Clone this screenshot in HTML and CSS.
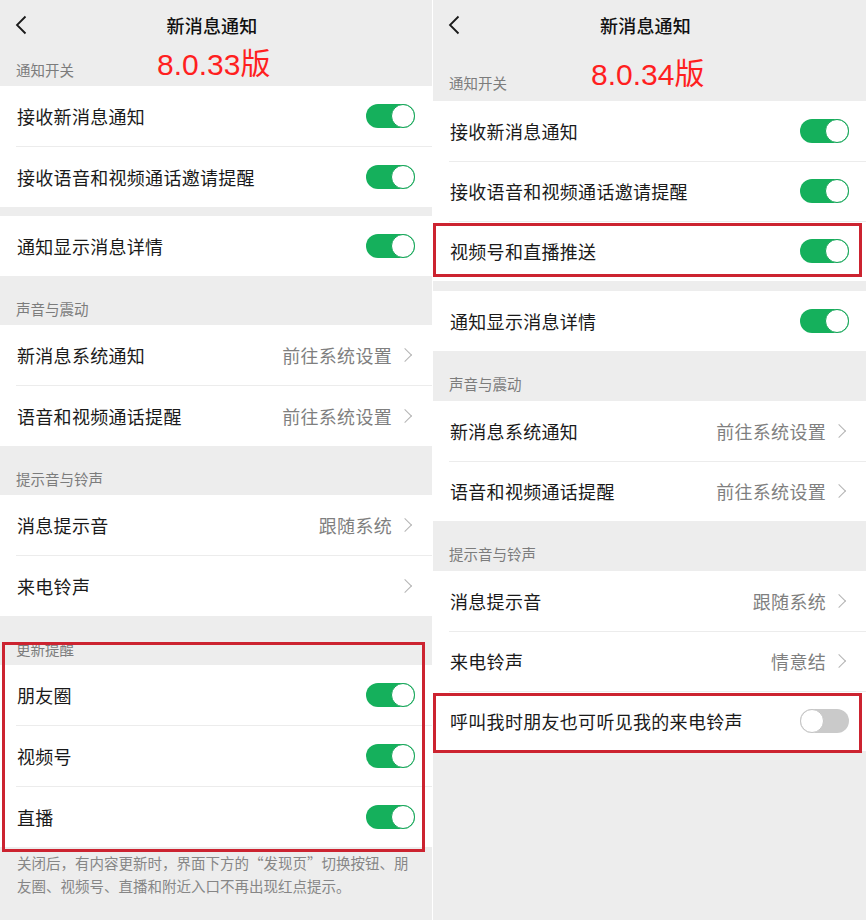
FILE: index.html
```html
<!DOCTYPE html>
<html lang="zh-CN">
<head>
<meta charset="utf-8">
<title>新消息通知</title>
<link rel="stylesheet" href="styles.css">
</head>
<body>
<div class="screens">
  <section class="panel panel-left">
    <header class="nav">
      <svg class="back" width="12" height="20" viewBox="0 0 12 20"><polyline points="10.5,1.5 2,10 10.5,18.5" fill="none" stroke="#1a1a1a" stroke-width="1.8"/></svg>
      <div class="nav-title">新消息通知</div>
    </header>
    <div class="sec-head sec-first"><span>通知开关</span><span class="ver">8.0.33<span class="ver-cjk">版</span></span></div>
    <div class="group">
      <div class="row"><span class="label">接收新消息通知</span><span class="switch on"></span></div>
      <div class="row"><span class="label">接收语音和视频通话邀请提醒</span><span class="switch on"></span></div>
    </div>
    <div class="group spaced">
      <div class="row"><span class="label">通知显示消息详情</span><span class="switch on"></span></div>
    </div>
    <div class="sec-head"><span>声音与震动</span></div>
    <div class="group">
      <div class="row"><span class="label">新消息系统通知</span><span class="value">前往系统设置</span><span class="chev"></span></div>
      <div class="row"><span class="label">语音和视频通话提醒</span><span class="value">前往系统设置</span><span class="chev"></span></div>
    </div>
    <div class="sec-head"><span>提示音与铃声</span></div>
    <div class="group">
      <div class="row"><span class="label">消息提示音</span><span class="value">跟随系统</span><span class="chev"></span></div>
      <div class="row"><span class="label">来电铃声</span><span class="value"></span><span class="chev"></span></div>
    </div>
    <div class="marked marked-update">
      <div class="sec-head"><span>更新提醒</span></div>
      <div class="group">
        <div class="row"><span class="label">朋友圈</span><span class="switch on"></span></div>
        <div class="row"><span class="label">视频号</span><span class="switch on"></span></div>
        <div class="row"><span class="label">直播</span><span class="switch on"></span></div>
      </div>
    </div>
    <p class="foot">关闭后，有内容更新时，界面下方的“发现页”切换按钮、朋友圈、视频号、直播和附近入口不再出现红点提示。</p>
  </section>

  <section class="panel panel-right">
    <header class="nav">
      <svg class="back" width="12" height="20" viewBox="0 0 12 20"><polyline points="10.5,1.5 2,10 10.5,18.5" fill="none" stroke="#1a1a1a" stroke-width="1.8"/></svg>
      <div class="nav-title">新消息通知</div>
    </header>
    <div class="sec-head sec-tall sec-top"><span>通知开关</span><span class="ver ver-right">8.0.34<span class="ver-cjk">版</span></span></div>
    <div class="group">
      <div class="row"><span class="label">接收新消息通知</span><span class="switch on"></span></div>
      <div class="row"><span class="label">接收语音和视频通话邀请提醒</span><span class="switch on"></span></div>
      <div class="row marked marked-push"><span class="label">视频号和直播推送</span><span class="switch on"></span></div>
    </div>
    <div class="group spaced">
      <div class="row"><span class="label">通知显示消息详情</span><span class="switch on"></span></div>
    </div>
    <div class="sec-head sec-tall"><span>声音与震动</span></div>
    <div class="group">
      <div class="row"><span class="label">新消息系统通知</span><span class="value">前往系统设置</span><span class="chev"></span></div>
      <div class="row"><span class="label">语音和视频通话提醒</span><span class="value">前往系统设置</span><span class="chev"></span></div>
    </div>
    <div class="sec-head sec-tall"><span>提示音与铃声</span></div>
    <div class="group">
      <div class="row"><span class="label">消息提示音</span><span class="value">跟随系统</span><span class="chev"></span></div>
      <div class="row"><span class="label">来电铃声</span><span class="value">情意结</span><span class="chev"></span></div>
      <div class="row marked marked-ring"><span class="label">呼叫我时朋友也可听见我的来电铃声</span><span class="switch"></span></div>
    </div>
  </section>
</div>
</body>
</html>
```

FILE: styles.css
```css
* { box-sizing: border-box; }
html, body { margin: 0; padding: 0; }
body {
  background: #ffffff;
  font-family: "Noto Sans CJK SC", "Noto Sans", sans-serif;
  width: 866px;
  height: 920px;
  overflow: hidden;
}
.screens {
  display: flex;
  gap: 1px;
  height: 920px;
}
.panel {
  background: #ededed;
  height: 920px;
  position: relative;
}
.panel-left { width: 432px; }
.panel-right { width: 433px; }

.nav {
  height: 50px;
  position: relative;
  display: flex;
  align-items: center;
  justify-content: center;
  padding-right: 8px;
}
.back {
  position: absolute;
  left: 15px;
  top: 15px;
}
.nav-title {
  font-size: 18px;
  font-weight: 500;
  color: #111111;
  letter-spacing: 0.2px;
}

.sec-head {
  height: 49px;
  display: flex;
  align-items: flex-end;
  padding: 0 16px 6px;
  font-size: 14.5px;
  line-height: 20px;
  color: #7c7c7c;
  position: relative;
}
.sec-first { height: 36px; }
.sec-tall { height: 50px; padding-bottom: 7px; }
.sec-tall.sec-top { height: 51px; padding-bottom: 8px; }

.ver {
  position: absolute;
  left: 157px;
  top: -3px;
  font-family: "Liberation Sans", Arial, sans-serif;
  font-size: 30px;
  line-height: 30px;
  color: #ff1f1f;
  white-space: nowrap;
}
.ver-right { left: 158px; top: 7px; }
.ver-cjk {
  font-family: "Noto Sans CJK SC", sans-serif;
  font-size: 30px;
  position: relative;
  top: -1px;
}

.group { background: #ffffff; }
.group.spaced { margin-top: 9px; }
.panel-right .group.spaced { margin-top: 10px; }

.row {
  height: 60px;
  display: flex;
  align-items: center;
  padding: 0 17px 0 17px;
  position: relative;
}
.row + .row { margin-top: 1px; }
.row + .row::before {
  content: "";
  position: absolute;
  left: 16px;
  right: 0;
  top: -1px;
  height: 1px;
  background: #ececec;
}
.panel-right .row + .row { margin-top: 0; }
.panel-right .row + .row::before { top: 0; }

.label {
  flex: 1;
  font-size: 18px;
  color: #1a1a1a;
  letter-spacing: 0.3px;
  white-space: nowrap;
}
.value {
  font-size: 18px;
  color: #7f7f7f;
  letter-spacing: 0.3px;
  margin-right: 11px;
}
.chev {
  width: 9px;
  height: 14px;
  margin-right: 3px;
  position: relative;
}
.chev::after {
  content: "";
  position: absolute;
  left: -3px;
  top: 2px;
  width: 9px;
  height: 9px;
  border-top: 1.6px solid #b4b4b4;
  border-right: 1.6px solid #b4b4b4;
  transform: rotate(45deg);
}

.switch {
  width: 49px;
  height: 24px;
  border-radius: 12px;
  background: #cacaca;
  position: relative;
  flex: none;
}
.switch::after {
  content: "";
  position: absolute;
  top: 0;
  left: 0;
  width: 24px;
  height: 24px;
  border-radius: 50%;
  background: #ffffff;
  border: 1.5px solid #c4c4c4;
  box-sizing: border-box;
}
.switch.on { background: #15b05c; }
.switch.on::after {
  left: auto;
  right: 0;
  border-color: #14a457;
}

.marked { position: relative; }
.marked::after {
  content: "";
  position: absolute;
  border: 3px solid #cc2330;
  pointer-events: none;
}
.marked-update::after { top: 26px; bottom: -5px; left: 2px; right: 7px; }
.marked-push::after { top: 2px; bottom: 4px; left: 0; right: 4px; }
.marked-ring::after { top: 2px; bottom: -2px; left: 0; right: 4px; }

.foot {
  margin: 0;
  padding: 4px 17px 0;
  font-size: 14.5px;
  line-height: 23px;
  color: #868686;
}
```
